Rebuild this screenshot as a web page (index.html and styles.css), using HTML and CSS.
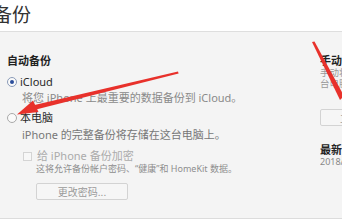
FILE: index.html
```html
<!DOCTYPE html>
<html lang="zh-CN">
<head>
<meta charset="utf-8">
<link rel="stylesheet" href="styles.css">
</head>
<body>
<div class="page">
  <header class="top">
    <h1 class="heading">备份</h1>
  </header>
  <section class="panel">
    <div class="col-left">
      <div class="title">自动备份</div>
      <div class="radio-row first">
        <span class="radio on"></span><span class="label">iCloud</span>
      </div>
      <div class="desc">将您 iPhone 上最重要的数据备份到 iCloud。</div>
      <div class="radio-row second">
        <span class="radio"></span><span class="label">本电脑</span>
      </div>
      <div class="desc d2">iPhone 的完整备份将存储在这台电脑上。</div>
      <div class="check-row">
        <span class="check"></span><span class="check-label">给 iPhone 备份加密</span>
      </div>
      <div class="small">这将允许备份帐户密码、“健康”和 HomeKit 数据。</div>
      <button class="btn">更改密码...</button>
    </div>
    <div class="col-right">
      <div class="title">手动备份和恢复</div>
      <div class="rdesc">手动将您的 iPhone 备份到这台电脑上或将存储在这</div>
      <div class="rdesc">台电脑上的备份恢复。</div>
      <button class="btn rbtn">立即备份</button>
      <div class="title latest">最新的备份：</div>
      <div class="date">2018/5/20 10:32 备份到此电脑</div>
    </div>
  </section>
  <svg class="arrows" width="342" height="222" viewBox="0 0 342 222">
    <polygon points="178,71.5 178.6,73.5 36,109.5 34.5,105" fill="#e8312b"/>
    <polygon points="17,114.5 33,100.5 38.5,112" fill="#e8312b"/>
    <polygon points="312,42 314.5,41.5 344,96 340,100" fill="#e8312b"/>
  </svg>
</div>
</body>
</html>
```

FILE: styles.css
```css
* { box-sizing: border-box; }
html, body { margin: 0; padding: 0; background: #ffffff; }
body {
  font-family: "Noto Sans", "Noto Sans CJK SC", sans-serif;
  color: #333333;
  width: 342px;
  height: 222px;
  overflow: hidden;
}
.page { position: relative; width: 342px; height: 222px; overflow: hidden; }
.top {
  height: 32px;
  background: #ffffff;
  border-bottom: 1px solid #dedede;
  overflow: hidden;
}
.heading {
  margin: 0 0 0 -7px;
  padding-top: 3px;
  font-size: 19px;
  line-height: 22px;
  font-weight: normal;
  color: #333;
  font-family: "Noto Sans CJK SC", sans-serif;
}
.panel {
  display: grid;
  grid-template-columns: 313px minmax(0, 1fr);
  padding: 21px 0 0 7px;
  height: 187px;
  background: #f4f4f4;
  border-bottom: 1px solid #dcdcdc;
}
.title {
  font-size: 11px;
  line-height: 14px;
  font-weight: bold;
  color: #222;
  font-family: "Noto Sans CJK SC", sans-serif;
  white-space: nowrap;
}
.radio-row { display: flex; align-items: center; height: 14px; }
.radio-row.first { margin-top: 8px; }
.radio-row.second { margin-top: 6px; }
.radio {
  width: 10px; height: 10px; border-radius: 50%;
  border: 1px solid #a9a9a9;
  background: #fafafa;
  margin-right: 3px;
  position: relative;
  flex: none;
}
.radio.on { border-color: #8a9bb8; }
.radio.on::after {
  content: "";
  position: absolute; left: 2px; top: 2px;
  width: 4px; height: 4px; border-radius: 50%;
  background: #2b4e9b;
}
.label { font-size: 11px; line-height: 14px; color: #2a2a2a; font-family: "Noto Sans", "Noto Sans CJK SC", sans-serif; }
.desc {
  margin: 2px 0 0 15px;
  font-size: 11px; line-height: 14px;
  color: #8a8a8a;
  white-space: nowrap;
}
.desc.d2 { margin-top: 3px; color: #777; }
.check-row { display: flex; align-items: center; height: 12px; margin: 8px 0 0 16px; }
.check {
  width: 9px; height: 9px;
  border: 1px solid #d4d4d4;
  background: #f7f7f7;
  margin-right: 5px;
  flex: none;
}
.check-label { font-size: 11px; line-height: 12px; color: #ababab; white-space: nowrap; }
.small {
  margin: 2px 0 0 29px;
  font-size: 9px; line-height: 10px;
  color: #8e8e8e;
  white-space: nowrap;
}
.btn {
  display: block;
  margin: 9px 0 0 29px;
  width: 92px; height: 17px;
  padding: 0;
  border: 1px solid #d3d3d3;
  border-radius: 2px;
  background: #f6f6f6;
  font-family: "Noto Sans CJK SC", sans-serif;
  font-size: 10px; line-height: 15px;
  color: #9a9a9a;
}
.col-right { overflow: hidden; min-width: 0; }
.rdesc {
  font-size: 9.5px; line-height: 11px;
  color: #9a9a9a;
  white-space: nowrap;
  overflow: hidden;
}
.rdesc:first-of-type { margin-top: 1px; }
.rbtn { margin: 20px 0 0 0; width: 80px; }
.title.latest { margin-top: 16px; }
.date { margin-top: 1px; font-size: 9px; line-height: 10px; color: #888; white-space: nowrap; overflow: hidden; }
.arrows { position: absolute; left: 0; top: 0; pointer-events: none; }
```
